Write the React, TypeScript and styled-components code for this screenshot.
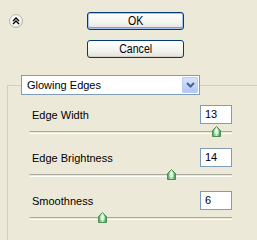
import React from 'react';
import styled, { createGlobalStyle } from 'styled-components';

const GlobalStyle = createGlobalStyle`
  html, body {
    margin: 0;
    padding: 0;
    background: #ece9d8;
    overflow: hidden;
  }
  body {
    font-family: Tahoma, "Liberation Sans", Arial, sans-serif;
    font-size: 11px;
    color: #000;
  }
`;

const Page = styled.div`
  width: 257px;
  height: 240px;
  overflow: hidden;
`;

const TopBar = styled.div`
  display: flex;
  padding: 12px 0 0 9px;
  height: 75px;
  box-sizing: border-box;
`;

const CollapseButton = styled.div`
  width: 14px;
  height: 14px;
  margin-top: 2px;
  border-radius: 50%;
  border: 1px solid #b8b6a8;
  box-sizing: border-box;
  background: radial-gradient(circle at 40% 35%, #ffffff 0%, #f4f3ee 55%, #d6d3c4 100%);
  display: flex;
  align-items: center;
  justify-content: center;
`;

const ButtonColumn = styled.div`
  display: flex;
  flex-direction: column;
  gap: 10px;
  margin-left: 64px;
`;

const Button = styled.div<{ $default?: boolean }>`
  width: 97px;
  height: 18px;
  box-sizing: border-box;
  border: 1px solid #003c74;
  border-radius: 3px;
  background: linear-gradient(#ffffff, #f3f3ef 60%, #e3e2da);
  box-shadow: ${(p) =>
    p.$default ? 'inset 0 0 0 1px #a9c3ee, inset 0 -1px 0 1px #7b9ee0' : 'inset 0 -1px 0 #d6d0c5'};
  display: flex;
  align-items: center;
  justify-content: center;
  font-size: 12px;
  transform-origin: center;
`;

const ButtonText = styled.span`
  display: inline-block;
  transform: scaleX(0.88);
`;

const Group = styled.fieldset`
  margin: 0 0 0 7px;
  padding: 10px 0 0 0;
  width: 270px;
  height: 220px;
  box-sizing: border-box;
  border: 1px solid #d0d0bf;
  border-radius: 0;
`;

const Legend = styled.legend`
  margin-left: 13px;
  padding: 0;
`;

const Combo = styled.div`
  width: 179px;
  height: 20px;
  box-sizing: border-box;
  border: 1px solid #7f9db9;
  background: #fff;
  display: flex;
  align-items: center;
  padding: 1px;
`;

const ComboText = styled.span`
  flex: 1;
  padding-left: 4px;
`;

const ComboArrow = styled.div`
  width: 16px;
  height: 16px;
  box-sizing: border-box;
  border: 1px solid #bccdf5;
  border-radius: 1px;
  background: linear-gradient(#d6e3fd, #c1d3fb 60%, #b2c6f7);
  display: flex;
  align-items: center;
  justify-content: center;
`;

const Rows = styled.div`
  display: flex;
  flex-direction: column;
  gap: 6px;
`;

const Row = styled.div`
  display: flex;
  flex-direction: column;
  width: 203px;
  margin-left: 21px;
`;

const Header = styled.div`
  display: flex;
  align-items: center;
  justify-content: space-between;
  height: 19px;
`;

const Label = styled.span`
  padding-left: 3px;
`;

const ValueBox = styled.div`
  width: 32px;
  height: 19px;
  box-sizing: border-box;
  border: 1px solid #7f9db9;
  background: #fff;
  padding: 2px 0 0 4px;
`;

const SliderArea = styled.div`
  position: relative;
  height: 18px;
  width: 203px;
`;

const Track = styled.div`
  position: absolute;
  left: 0;
  right: 0;
  top: 7px;
  height: 1px;
  border-top: 1px solid #a9a89c;
  border-bottom: 1px solid #fdfdfb;
  border-radius: 2px 0 0 2px;
`;

const Thumb = styled.svg`
  position: absolute;
  top: 2px;
  width: 9px;
  height: 11px;
  margin-left: -4px;
`;

const sliders = [
  { label: 'Edge Width', value: 13, min: 1, max: 14 },
  { label: 'Edge Brightness', value: 14, min: 0, max: 20 },
  { label: 'Smoothness', value: 6, min: 1, max: 15 },
];

const ThumbIcon: React.FC<{ left: number }> = ({ left }) => (
  <Thumb viewBox="0 0 9 11" style={{ left }}>
    <defs>
      <linearGradient id="tg" x1="0" y1="0" x2="1" y2="0">
        <stop offset="0" stopColor="#3f9a4e" />
        <stop offset="0.5" stopColor="#c9f0cf" />
        <stop offset="1" stopColor="#2f8a3e" />
      </linearGradient>
    </defs>
    <path d="M4.5 0.5 L8.5 4.5 L8.5 10.5 L0.5 10.5 L0.5 4.5 Z" fill="url(#tg)" stroke="#4f8f55" strokeWidth="1" />
    <path d="M4.5 2 L6.5 4.5 L6.5 8 L2.5 8 L2.5 4.5 Z" fill="#e8fbea" opacity="0.8" />
  </Thumb>
);

const App: React.FC = () => {
  return (
    <Page>
      <GlobalStyle />
      <TopBar>
        <CollapseButton>
          <svg width="8" height="8" viewBox="0 0 8 8">
            <path d="M1 4 L4 1 L7 4 M1 7 L4 4 L7 7" fill="none" stroke="#000" strokeWidth="1.4" />
          </svg>
        </CollapseButton>
        <ButtonColumn>
          <Button $default>
            <ButtonText>OK</ButtonText>
          </Button>
          <Button>
            <ButtonText>Cancel</ButtonText>
          </Button>
        </ButtonColumn>
      </TopBar>
      <Group>
        <Legend>
          <Combo>
            <ComboText>Glowing Edges</ComboText>
            <ComboArrow>
              <svg width="9" height="6" viewBox="0 0 9 6">
                <path d="M1 1 L4.5 4.5 L8 1" fill="none" stroke="#4d6185" strokeWidth="2" />
              </svg>
            </ComboArrow>
          </Combo>
        </Legend>
        <Rows>
          {sliders.map((s) => (
            <Row key={s.label}>
              <Header>
                <Label>{s.label}</Label>
                <ValueBox>{s.value}</ValueBox>
              </Header>
              <SliderArea>
                <Track />
                <ThumbIcon left={Math.round(((s.value - s.min) / (s.max - s.min)) * 203)} />
              </SliderArea>
            </Row>
          ))}
        </Rows>
      </Group>
    </Page>
  );
};

export default App;
